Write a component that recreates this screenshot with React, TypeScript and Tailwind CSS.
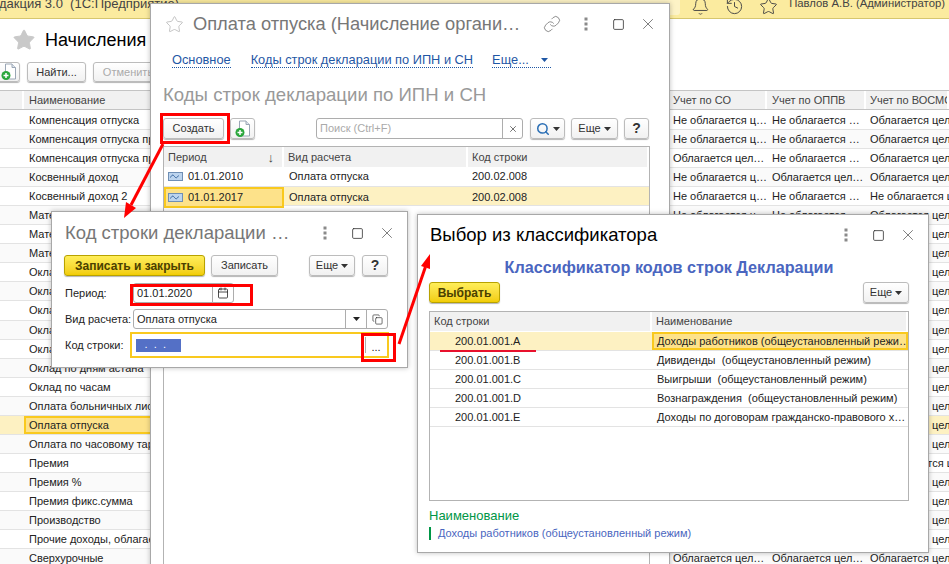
import { Bell, Calendar, Copy, History, Link, Search, Square, Star, X } from "lucide-react";
import type { ReactNode } from "react";

const NO_C = "Не облагается ц…";
const NO_S = "Не облагается …";
const YES = "Облагается цел…";
const YES_L = "Облагается целиком";
const NO_L = "Не облагается целиком";

const names = [
  "Компенсация отпуска",
  "Компенсация отпуска при увольнении",
  "Компенсация отпуска прочая",
  "Косвенный доход",
  "Косвенный доход 2",
  "Материальная помощь",
  "Материальная выгода",
  "Материнские пособия",
  "Оклад",
  "Оклад по дням",
  "Оклад по часам 2",
  "Оклад по дням 2",
  "Оклад по дням вахта",
  "Оклад по дням астана",
  "Оклад по часам",
  "Оплата больничных листов",
  "Оплата отпуска",
  "Оплата по часовому тарифу",
  "Премия",
  "Премия %",
  "Премия фикс.сумма",
  "Производство",
  "Прочие доходы, облагаемые",
  "Сверхурочные",
];

// right-hand columns of the list, most rows share the same values
function accounting(i: number) {
  if (i === 2) return [YES, NO_S, YES_L];
  if (i === 3) return [NO_C, YES, YES_L];
  if (i === 4 || i === 18) return [NO_C, NO_S, NO_L];
  if (i === 23) return [YES, YES, YES_L];
  return [NO_C, NO_S, YES_L];
}

function Caret() {
  return (
    <svg width="7" height="4" viewBox="0 0 7 4" className="shrink-0">
      <path d="M0 0h7L3.5 4z" fill="currentColor" />
    </svg>
  );
}

function Dots() {
  return (
    <svg width="4" height="14" viewBox="0 0 4 14">
      <rect x="0.5" y="0.5" width="3" height="3" fill="#8a8a8a" />
      <rect x="0.5" y="5.5" width="3" height="3" fill="#8a8a8a" />
      <rect x="0.5" y="10.5" width="3" height="3" fill="#8a8a8a" />
    </svg>
  );
}

function AddDoc() {
  return (
    <svg width="16" height="18" viewBox="0 0 16 18">
      <path d="M4.5 1h6.5l3.5 3.5V16H4.5z" fill="#fff" stroke="#9aa6b5" />
      <path d="M11 1v3.5h3.5" fill="#dfe6ee" stroke="#9aa6b5" />
      <circle cx="5" cy="12.5" r="4.5" fill="#2aa63c" />
      <path d="M5 10v5M2.5 12.5h5" stroke="#fff" strokeWidth="1.5" />
    </svg>
  );
}

function RowIcon() {
  return (
    <svg width="15" height="9" viewBox="0 0 15 9" className="shrink-0">
      <rect x="0.5" y="0.5" width="14" height="8" fill="#bcd4ee" stroke="#6f8fb5" />
      <path d="M2.5 5.5c1.5-3 2.5-3 4 -1s2.5 1.5 4-1" fill="none" stroke="#2f5f9a" />
    </svg>
  );
}

function Btn({ className, children }: { className: string; children: ReactNode }) {
  return (
    <div className={`flex items-center justify-center gap-[3px] rounded-[3px] border border-[#bcbcbc] bg-linear-to-b from-white to-[#f1f1f1] text-[11px] text-[#333] shadow-[0_1px_1px_#b5b5b5] ${className}`}>
      {children}
    </div>
  );
}

function YellowBtn({ className, children }: { className: string; children: ReactNode }) {
  return (
    <div className={`flex items-center justify-center rounded-[3px] border border-[#b8a200] bg-linear-to-b from-[#ffee58] to-[#f2cd00] text-[12px] font-bold text-[#4a4000] shadow-[0_1px_1px_#b5b5b5] ${className}`}>
      {children}
    </div>
  );
}

function WinIcons({ link }: { link?: boolean }) {
  return (
    <div className="flex items-center text-[#555]">
      {link && <Link size={18} strokeWidth={1.1} className="mr-[23px] text-[#777]" />}
      <Dots />
      <Square size={13} strokeWidth={1.5} className="ml-[24px] text-[#333]" />
      <X size={18} strokeWidth={1} className="ml-[14px]" />
    </div>
  );
}

function HeadCell({ className, children }: { className?: string; children: ReactNode }) {
  return (
    <div className={`flex items-center overflow-hidden whitespace-nowrap border-r-2 border-white bg-[#f1f1f1] text-[#444] ${className ?? ""}`}>
      {children}
    </div>
  );
}

function Field({ className, children }: { className: string; children: ReactNode }) {
  return (
    <div className={`flex h-[20px] items-center rounded-[3px] border border-[#adadad] bg-white ${className}`}>
      {children}
    </div>
  );
}

const selectedCell = "border-2 border-[#f9c91e] bg-[#fde28a]";

function BackgroundList() {
  return (
    <div className="flex h-full flex-col text-[11px] text-[#222]">
      <div className="relative flex h-[19px] shrink-0 items-start justify-between overflow-hidden border-b border-[#d6c66e] bg-[#fbeb9f] text-[13px] leading-[7px] text-[#444]">
        <span className="-ml-[8px] whitespace-nowrap">едакция 3.0&nbsp; (1С:Предприятие)</span>
        <div className="absolute left-[370px] top-[-6px] h-[21px] w-[310px] rounded-[3px] bg-[#fdf3c6]" />
        <div className="flex items-start gap-[15px] pr-[4px] text-[#444]">
          <Bell size={19} strokeWidth={1.2} className="-mt-[3px]" />
          <History size={19} strokeWidth={1.2} className="-mt-[3px]" />
          <Star size={19} strokeWidth={1.2} className="-mt-[3px]" />
          <span className="-ml-[4px] whitespace-nowrap text-[11.3px] leading-[7px]">Павлов А.В. (Администратор)</span>
        </div>
      </div>
      <div className="flex h-[42px] shrink-0 items-center pl-[12px]">
        <Star size={24} strokeWidth={1} className="fill-[#c9c9c9] text-[#c9c9c9]" />
        <span className="ml-[9px] whitespace-nowrap text-[18px] font-medium text-black">Начисления</span>
      </div>
      <div className="mt-px flex h-[20px] shrink-0 items-stretch gap-[7px] pl-0">
        <Btn className="-ml-[3px] w-[23px]">
          <AddDoc />
        </Btn>
        <Btn className="w-[59px]">Найти...</Btn>
        <Btn className="w-[70px] !text-[#aaa]">Отменить</Btn>
      </div>
      <div className="mt-[8px] grid h-[20px] shrink-0 grid-cols-[24px_646px_97px_99px_83px] border-y border-[#c4c4c4]">
        <HeadCell> </HeadCell>
        <HeadCell className="pl-[5px]">Наименование</HeadCell>
        <HeadCell className="pl-[3px]">Учет по СО</HeadCell>
        <HeadCell className="pl-[5px]">Учет по ОППВ</HeadCell>
        <HeadCell className="pl-[4px]">Учет по ВОСМС</HeadCell>
      </div>
      <div className="mt-px">
        {names.map((name, i) => {
          const selected = i === 16;
          const [a, b, c] = accounting(i);
          return (
            <div
              key={name}
              className={`grid h-[19.05px] grid-cols-[24px_646px_97px_99px_83px] items-stretch border-b border-[#e3e3e3] leading-[18px] ${selected ? "bg-[#fdf1c2]" : i % 2 ? "bg-[#fafafa]" : "bg-white"}`}
            >
              <div />
              <div className={`overflow-hidden whitespace-nowrap pl-[5px] ${selected ? selectedCell + " !pl-[3px] leading-[14px]" : ""}`}>{name}</div>
              <div className="overflow-hidden whitespace-nowrap pl-[3px]">{a}</div>
              <div className="overflow-hidden whitespace-nowrap pl-[5px]">{b}</div>
              <div className="overflow-hidden whitespace-nowrap pl-[4px]">{c}</div>
            </div>
          );
        })}
      </div>
    </div>
  );
}

function DeclarationWindow() {
  return (
    <div className="absolute left-[150px] top-[3px] flex h-[600px] w-[520px] flex-col border border-[#a8a8a8] bg-white pl-[12px] pr-[19px] text-[11px] text-[#222] shadow-[0_0_5px_rgba(0,0,0,0.25)]">
      <div className="flex h-[40px] shrink-0 items-center">
        <Star size={19} strokeWidth={1} className="ml-[2px] text-[#b5b5b5]" />
        <span className="ml-[9px] whitespace-nowrap text-[18.3px] text-[#777]">Оплата отпуска (Начисление органи…</span>
        <div className="ml-auto -mr-[7px]">
          <WinIcons link />
        </div>
      </div>
      <div className="mt-[6px] flex h-[20px] shrink-0 items-center pl-[9px] text-[12.8px] text-[#1f57a5]">
        <span className="border-b border-dotted border-[#1f57a5] leading-[15px]">Основное</span>
        <span className="ml-[20px] border-b border-dotted border-[#1f57a5] leading-[15px]">Коды строк декларации по ИПН и СН</span>
        <span className="ml-[19px] flex items-center gap-[12px] border-b border-dotted border-[#1f57a5] pr-[3px] leading-[15px]">
          Еще...
          <Caret />
        </span>
      </div>
      <div className="mt-[14px] h-[22px] shrink-0 whitespace-nowrap text-[18.6px] leading-[22px] text-[#999]">Коды строк декларации по ИПН и СН</div>
      <div className="mt-[12px] flex h-[21px] shrink-0 items-stretch">
        <Btn className="w-[61px]">Создать</Btn>
        <Btn className="ml-[6px] w-[25px]">
          <AddDoc />
        </Btn>
        <div className="ml-[61px] flex w-[207px] items-stretch rounded-[3px] border border-[#adadad]">
          <span className="flex-1 pl-[3px] leading-[19px] text-[#aaa]">Поиск (Ctrl+F)</span>
          <span className="flex w-[20px] items-center justify-center border-l border-[#adadad]">
            <X size={10} strokeWidth={1.5} />
          </span>
        </div>
        <Btn className="ml-[7px] w-[35px]">
          <Search size={14} strokeWidth={2.6} className="text-[#2b6fb5]" />
          <Caret />
        </Btn>
        <Btn className="ml-[6px] w-[47px]">
          Еще
          <Caret />
        </Btn>
        <Btn className="ml-[6px] w-[25px] !text-[14px] font-bold">?</Btn>
      </div>
      <div className="mt-[7px] h-[500px] shrink-0 border border-[#b3b3b3]">
        <div className="grid h-[20px] grid-cols-[120px_184px_1fr]">
          <HeadCell className="justify-between pl-[4px] pr-[8px]">
            Период
            <span className="text-[13px] leading-none">↓</span>
          </HeadCell>
          <HeadCell className="pl-[4px]">Вид расчета</HeadCell>
          <HeadCell className="pl-[4px]">Код строки</HeadCell>
        </div>
        <div className="grid h-[20px] grid-cols-[120px_184px_1fr] items-center border-b border-[#e3e3e3]">
          <div className="flex items-center gap-[5px] pl-[4px]">
            <RowIcon />
            01.01.2010
          </div>
          <div className="pl-[5px]">Оплата отпуска</div>
          <div className="pl-[4px]">200.02.008</div>
        </div>
        <div className="grid h-[19px] grid-cols-[120px_184px_1fr] items-stretch border-b border-[#e3e3e3] bg-[#fdf1c2]">
          <div className={`flex items-center gap-[5px] pl-[2px] ${selectedCell}`}>
            <RowIcon />
            01.01.2017
          </div>
          <div className="flex items-center pl-[5px]">Оплата отпуска</div>
          <div className="flex items-center pl-[4px]">200.02.008</div>
        </div>
      </div>
    </div>
  );
}

function CodeWindow() {
  return (
    <div className="absolute left-[51px] top-[211px] flex h-[157px] w-[357px] flex-col border border-[#a8a8a8] bg-white pl-[12px] pr-[18px] text-[11px] text-[#222] shadow-[0_0_5px_rgba(0,0,0,0.25)]">
      <div className="flex h-[42px] shrink-0 items-center">
        <span className="ml-px whitespace-nowrap text-[18.5px] text-[#777]">Код строки декларации …</span>
        <div className="ml-auto -mr-[7px]">
          <WinIcons />
        </div>
      </div>
      <div className="mt-px flex h-[21px] shrink-0 items-stretch">
        <YellowBtn className="w-[141px]">Записать и закрыть</YellowBtn>
        <Btn className="ml-[6px] w-[67px]">Записать</Btn>
        <Btn className="ml-[31px] w-[46px]">
          Еще
          <Caret />
        </Btn>
        <Btn className="ml-[7px] w-[26px] !text-[14px] font-bold">?</Btn>
      </div>
      <div className="mt-[7px] flex shrink-0 items-center">
        <span className="ml-px w-[68px] whitespace-nowrap">Период:</span>
        <Field className="w-[101px] pl-[3px]">
          <span className="flex-1">01.01.2020</span>
          <span className="flex h-full w-[21px] items-center justify-center border-l border-[#adadad]">
            <Calendar size={12} strokeWidth={1.6} />
          </span>
        </Field>
      </div>
      <div className="mt-[6px] flex shrink-0 items-center">
        <span className="ml-px w-[68px] whitespace-nowrap">Вид расчета:</span>
        <Field className="w-[255px] pl-[3px]">
          <span className="flex-1">Оплата отпуска</span>
          <span className="flex h-full w-[21px] items-center justify-center border-l border-[#adadad]">
            <Caret />
          </span>
          <span className="flex h-full w-[21px] items-center justify-center border-l border-[#adadad]">
            <Copy size={11} strokeWidth={1.4} />
          </span>
        </Field>
      </div>
      <div className="mt-[3px] flex shrink-0 items-center">
        <span className="ml-px w-[65px] whitespace-nowrap">Код строки:</span>
        <div className="flex h-[26px] w-[261px] items-center border-2 border-[#f9c91e] bg-white pl-[4px]">
          <span className="h-[13px] w-[45px] bg-[#5470c6] pl-[9px] text-[11px] leading-[11px] text-white">. &nbsp;. &nbsp;.</span>
          <span className="ml-auto mr-px flex h-[16px] w-[21px] items-end justify-center border-l border-[#adadad] leading-[12px]">...</span>
        </div>
      </div>
    </div>
  );
}

const classifier = [
  ["200.01.001.A", "Доходы работников (общеустановленный режи…"],
  ["200.01.001.B", "Дивиденды  (общеустановленный режим)"],
  ["200.01.001.C", "Выигрыши  (общеустановленный режим)"],
  ["200.01.001.D", "Вознаграждения  (общеустановленный режим)"],
  ["200.01.001.E", "Доходы по договорам гражданско-правового х…"],
];

function ClassifierWindow() {
  return (
    <div className="absolute left-[417px] top-[214px] flex h-[339px] w-[512px] flex-col border border-[#a8a8a8] bg-white pl-[11px] pr-[19px] text-[11px] text-[#222] shadow-[0_0_5px_rgba(0,0,0,0.25)]">
      <div className="flex h-[40px] shrink-0 items-center">
        <span className="ml-px whitespace-nowrap text-[18.5px] text-black">Выбор из классификатора</span>
        <div className="ml-auto -mr-[8px]">
          <WinIcons />
        </div>
      </div>
      <div className="mt-px h-[22px] shrink-0 text-center text-[16.2px] font-bold leading-[22px] text-[#4a66c0]">Классификатор кодов строк Декларации</div>
      <div className="mt-[4px] flex h-[21px] shrink-0 items-stretch justify-between">
        <YellowBtn className="w-[71px]">Выбрать</YellowBtn>
        <Btn className="w-[46px]">
          Еще
          <Caret />
        </Btn>
      </div>
      <div className="mt-[8px] h-[190px] shrink-0 border border-[#b3b3b3]">
        <div className="mb-px grid h-[19px] grid-cols-[222px_1fr]">
          <HeadCell className="pl-[4px]">Код строки</HeadCell>
          <HeadCell className="pl-[4px]">Наименование</HeadCell>
        </div>
        {classifier.map(([code, title], i) => (
          <div key={code} className={`grid h-[19px] grid-cols-[222px_1fr] items-stretch border-b border-[#e3e3e3] ${i === 0 ? "bg-[#fdf1c2]" : ""}`}>
            <div className="flex items-center pl-[25px]">{code}</div>
            <div className={`flex items-center overflow-hidden whitespace-pre pl-[5px] ${i === 0 ? selectedCell + " !pl-[3px]" : ""}`}>{title}</div>
          </div>
        ))}
      </div>
      <div className="mt-[7px] text-[13px] leading-[16px] text-[#009646]">Наименование</div>
      <div className="mt-[3px] flex h-[13px] items-center border-l-2 border-[#009646] pl-[7px] text-[#4a66c0]">Доходы работников (общеустановленный режим)</div>
    </div>
  );
}

function Annotations() {
  return (
    <svg className="pointer-events-none absolute left-0 top-0" width="949" height="564" viewBox="0 0 949 564">
      <g fill="none" stroke="#f00" strokeWidth="3">
        <rect x="161.5" y="114.5" width="67" height="28" />
        <rect x="131.5" y="285.5" width="120" height="19" />
        <rect x="362.5" y="334.5" width="32" height="26" />
        <path d="M163 144L131 205" />
        <path d="M399 344L425.4 267" />
      </g>
      <path d="M440 351h96" stroke="#e8112d" strokeWidth="2" />
      <path d="M124 218l12-10-10-6z" fill="#f00" />
      <path d="M430 254l0 15-9-3z" fill="#f00" />
    </svg>
  );
}

export default function App() {
  return (
    <div className="relative h-[564px] w-[949px] overflow-hidden bg-white font-['Liberation_Sans',Arial,sans-serif]">
      <BackgroundList />
      <DeclarationWindow />
      <CodeWindow />
      <ClassifierWindow />
      <Annotations />
    </div>
  );
}
